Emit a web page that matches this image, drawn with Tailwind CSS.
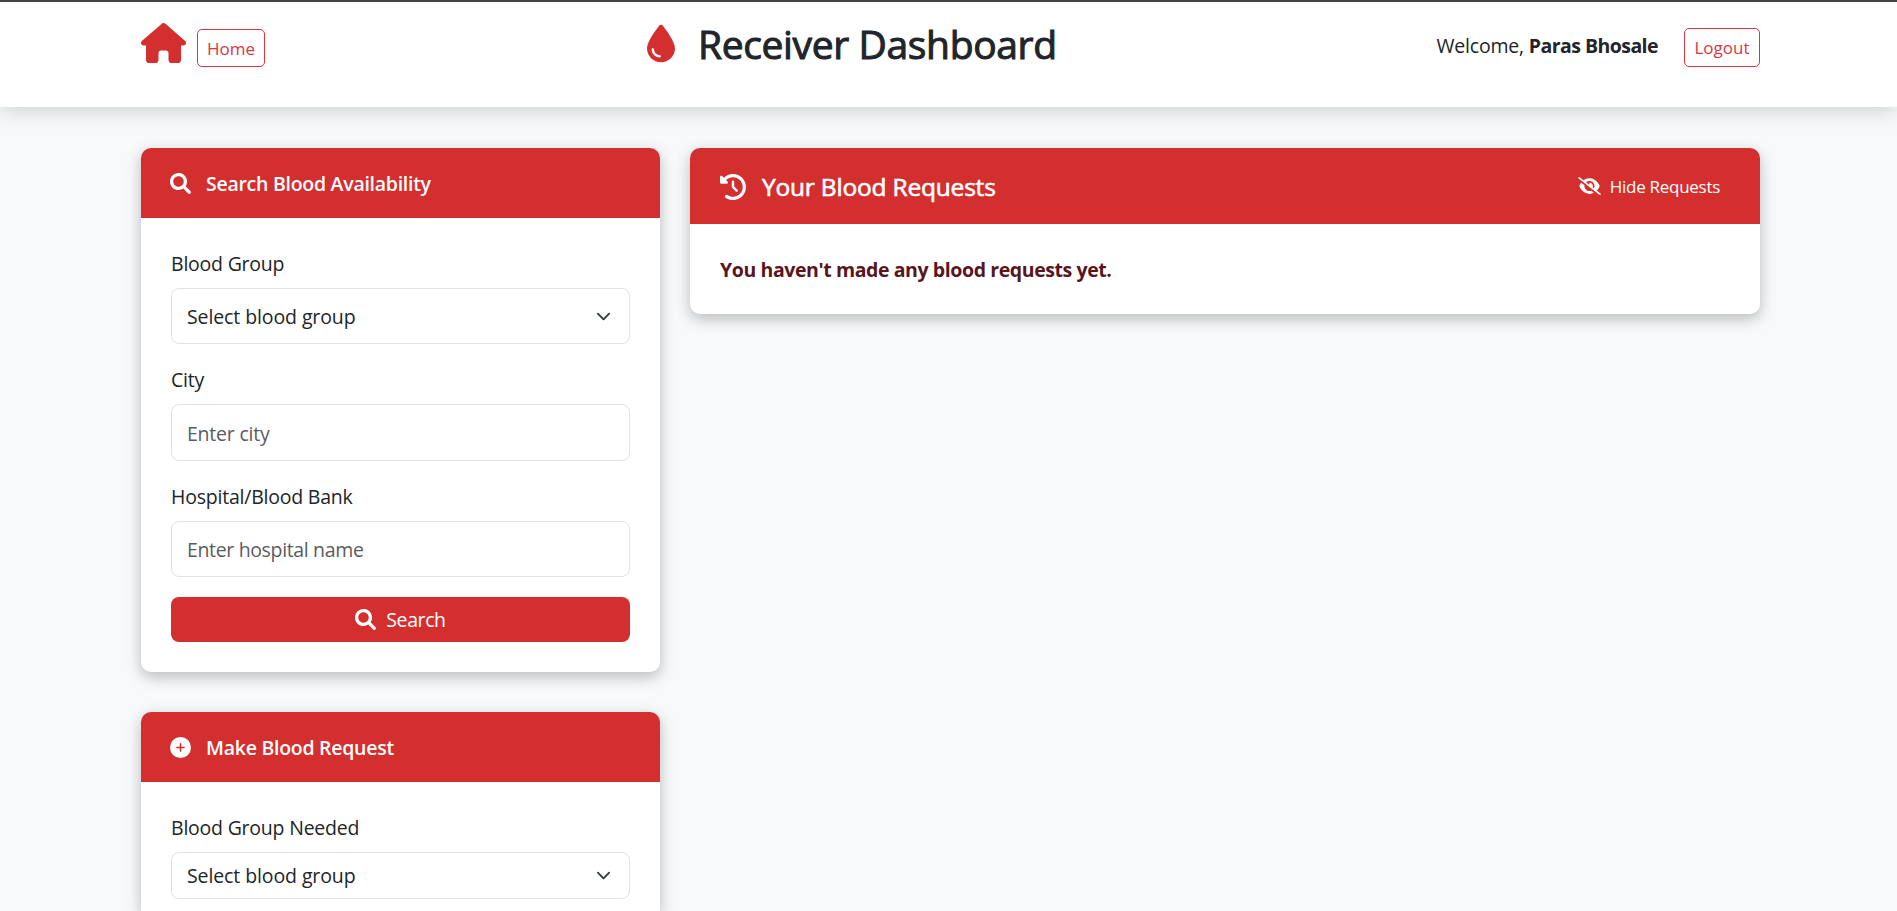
<!DOCTYPE html>
<html lang="en">
<head>
<meta charset="utf-8">
<title>Receiver Dashboard</title>
<script src="https://cdn.jsdelivr.net/npm/@tailwindcss/browser@4"></script>
</head>
<body class="h-[911px] overflow-hidden bg-[#f8f9fa] font-['Open_Sans','Noto_Sans',sans-serif] text-[19.5px] leading-[30px] text-[#212529]">
<svg class="hidden">
  <symbol id="search" viewBox="0 0 512 512"><path d="M500.3 443.7l-119.7-119.7c27.22-40.41 40.65-90.9 33.46-144.7C401.8 87.79 326.8 13.32 235.2 1.723C99.01-15.51-15.51 99.01 1.724 235.2c11.6 91.64 86.08 166.7 177.6 178.9c53.8 7.189 104.3-6.236 144.7-33.46l119.7 119.7c15.62 15.62 40.95 15.62 56.57 0C515.9 484.7 515.9 459.3 500.3 443.7zM79.1 208c0-70.58 57.42-128 128-128s128 57.42 128 128c0 70.58-57.42 128-128 128S79.1 278.6 79.1 208z"/></symbol>
  <symbol id="chevron" viewBox="0 0 16 16"><path fill="none" stroke="#343a40" stroke-linecap="round" stroke-linejoin="round" stroke-width="2" d="m2 5 6 6 6-6"/></symbol>
</svg>
<header class="relative h-[107px] border-t-2 border-[#444] bg-white pr-[137px] pl-[141px] shadow-[0_5px_19px_rgba(0,0,0,0.15)]">
  <div class="flex items-start">
    <div class="flex w-[506px] shrink-0 items-start gap-[11px] pt-[21px]">
      <svg class="h-[40px] w-[45px] shrink-0 fill-[#d32f2f]" viewBox="0 0 576 512"><path d="M575.8 255.5c0 18-15 32.1-32 32.1h-32l.7 160.2c0 2.7-.2 5.4-.5 8.1V472c0 22.1-17.9 40-40 40H456c-1.1 0-2.2 0-3.3-.1c-1.4 .1-2.8 .1-4.2 .1H416 392c-22.1 0-40-17.9-40-40V448 384c0-17.7-14.3-32-32-32H256c-17.7 0-32 14.3-32 32v64 24c0 22.1-17.9 40-40 40H160 128.1c-1.5 0-3-.1-4.5-.2c-1.2 .1-2.4 .2-3.6 .2H104c-22.1 0-40-17.9-40-40V360c0-.9 0-1.9 .1-2.8V287.6H32c-18 0-32-14-32-32.1c0-9 3-17 10-24L266.4 8c7-7 15-8 22-8s15 2 21 7L564.8 231.5c8 7 12 15 11 24z"/></svg>
      <a class="mt-[6px] flex h-[38px] w-[68px] items-center justify-center rounded-[5px] border border-[#dc3545] pt-0.5 text-[17px] text-[#dc3545]"><span>Home</span></a>
    </div>
    <h1 class="flex items-start pt-[22px] text-[39px] leading-[48px]">
      <svg class="mr-[23px] h-[39px] w-[28px] fill-[#d32f2f]" viewBox="0 0 384 512"><path d="M192 512C86 512 0 426 0 320C0 228.8 130.2 57.7 166.6 11.7C172.6 4.2 181.5 0 191.1 0h1.8c9.6 0 18.5 4.2 24.5 11.7C253.8 57.7 384 228.8 384 320c0 106-86 192-192 192zM96 336c0-8.8-7.2-16-16-16s-16 7.2-16 16c0 61.9 50.1 112 112 112c8.8 0 16-7.2 16-16s-7.2-16-16-16c-44.2 0-80-35.8-80-80z"/></svg>
      <span class="-mt-1 tracking-[-0.36px] whitespace-nowrap [-webkit-text-stroke:1px_#212529]">Receiver Dashboard</span>
    </h1>
    <div class="ml-auto flex items-start pt-[26px]">
      <span class="mt-[3px] mr-[26px] tracking-[-0.2px] whitespace-nowrap">Welcome, <b class="font-bold tracking-[-0.55px]">Paras Bhosale</b></span>
      <a class="flex h-[39px] w-[76px] items-center justify-center rounded-[5px] border border-[#dc3545] text-[17px] text-[#dc3545]"><span>Logout</span></a>
    </div>
  </div>
</header>
<main class="flex items-start gap-[30px] pt-[41px] pr-[137px] pl-[141px]">
  <div class="flex w-[519px] shrink-0 flex-col gap-10">
    <section class="h-[524px] overflow-hidden rounded-[10px] bg-white shadow-[0_5px_15px_rgba(0,0,0,0.25)]">
      <h2 class="flex h-[70px] items-center bg-[#d32f2f] pt-0.5 pl-[29px] font-semibold tracking-[-0.27px] text-white">
        <svg class="mr-[15px] -mt-0.5 h-[21px] w-[21px] fill-white"><use href="#search"/></svg><span>Search Blood Availability</span>
      </h2>
      <form class="flex flex-col px-[30px] pt-[31px] tracking-[-0.22px]">
        <label class="mb-[9px]">Blood Group</label>
        <div class="mb-[21px] flex h-[56px] items-center justify-between rounded-lg border border-[#dee2e6] pt-0.5 pr-[18px] pl-[15px]"><span class="tracking-[-0.1px]">Select blood group</span><svg class="-mt-0.5 h-[15px] w-[15px]"><use href="#chevron"/></svg></div>
        <label class="mb-[9px]">City</label>
        <div class="mb-[21px] flex h-[57px] items-center rounded-lg border border-[#dee2e6] pt-0.5 pl-[15px] text-[#595c5f]"><span>Enter city</span></div>
        <label class="mb-[9px]">Hospital/Blood Bank</label>
        <div class="mb-5 flex h-[56px] items-center rounded-lg border border-[#dee2e6] pt-0.5 pl-[15px] text-[#595c5f]"><span class="tracking-[-0.35px]">Enter hospital name</span></div>
        <button type="button" class="flex h-[45px] items-center justify-center gap-[10px] rounded-lg bg-[#d32f2f] text-white"><svg class="h-[21px] w-[21px] fill-white"><use href="#search"/></svg><span class="pt-px tracking-[-0.4px]">Search</span></button>
      </form>
    </section>
    <section class="h-[199px] overflow-hidden rounded-t-[10px] bg-white shadow-[0_5px_15px_rgba(0,0,0,0.25)]">
      <h2 class="flex h-[70px] items-center bg-[#d32f2f] pt-0.5 pl-[29px] font-semibold tracking-[-0.27px] text-white">
        <svg class="mr-[15px] -mt-0.5 h-[21px] w-[21px]" viewBox="0 0 512 512"><circle cx="256" cy="256" r="256" fill="#fff"/><path d="M256 168v176M168 256h176" stroke="#d32f2f" stroke-width="38" stroke-linecap="round"/></svg><span>Make Blood Request</span>
      </h2>
      <form class="flex flex-col px-[30px] pt-[31px] tracking-[-0.22px]">
        <label class="mb-[9px]">Blood Group Needed</label>
        <div class="flex h-[47px] items-center justify-between rounded-lg border border-[#dee2e6] pt-px pr-[18px] pl-[15px]"><span class="tracking-[-0.1px]">Select blood group</span><svg class="-mt-0.5 h-[15px] w-[15px]"><use href="#chevron"/></svg></div>
      </form>
    </section>
  </div>
  <section class="h-[166px] grow overflow-hidden rounded-[10px] bg-white shadow-[0_5px_15px_rgba(0,0,0,0.25)]">
    <div class="flex h-[76px] items-center justify-between bg-[#d32f2f] pt-px pr-10 pl-[30px] text-white">
      <h2 class="flex items-center text-[24.5px]">
        <svg class="mr-4 h-[26px] w-[26px] fill-white" viewBox="0 0 512 512"><path d="M75 75L41 41C25.9 25.9 0 36.6 0 57.9V168c0 13.3 10.7 24 24 24H134.1c21.4 0 32.1-25.9 17-41l-30.8-30.8C155 85.5 203 64 256 64c106 0 192 86 192 192s-86 192-192 192c-40.8 0-78.6-12.7-109.7-34.4c-14.5-10.1-34.4-6.6-44.6 7.9s-6.6 34.4 7.9 44.6C151.2 495 201.7 512 256 512c141.4 0 256-114.6 256-256S397.4 0 256 0C185.3 0 121.3 28.7 75 75zm181 53c-13.3 0-24 10.7-24 24V256c0 6.4 2.5 12.5 7 17l72 72c9.4 9.4 24.6 9.4 33.9 0s9.4-24.6 0-33.9l-65-65V152c0-13.3-10.7-24-24-24z"/></svg><span class="pt-px tracking-[-0.2px] [-webkit-text-stroke:0.6px_white]">Your Blood Requests</span>
      </h2>
      <div class="flex items-center text-[17px] tracking-[-0.28px]">
        <svg class="mr-[9px] -mt-px h-[18px] w-[23px] fill-white" viewBox="0 0 640 512"><path d="M38.8 5.1C28.4-3.1 13.3-1.2 5.1 9.2S-1.2 34.7 9.2 42.9l592 464c10.4 8.2 25.5 6.3 33.7-4.1s6.3-25.5-4.1-33.7L525.6 386.7c39.6-40.6 66.4-86.1 79.9-118.4c3.3-7.9 3.3-16.7 0-24.6c-14.9-35.7-46.2-87.7-93-131.1C465.5 68.8 400.8 32 320 32c-68.2 0-125 26.3-169.3 60.8L38.8 5.1zM223.1 149.5C248.6 126.2 282.7 112 320 112c79.5 0 144 64.5 144 144c0 24.9-6.3 48.3-17.4 68.7L408 294.5c8.4-19.3 10.6-41.4 4.8-63.3c-11.1-41.5-47.8-69.4-88.6-71.1c-5.8-.2-9.2 6.1-7.4 11.7c2.1 6.4 3.3 13.2 3.3 20.3c0 10.2-2.4 19.8-6.6 28.3l-90.3-70.8zM373 389.9c-16.4 6.5-34.3 10.1-53 10.1c-79.5 0-144-64.5-144-144c0-6.9 .5-13.6 1.4-20.2L83.1 161.5C60.3 191.2 44 220.8 34.5 243.7c-3.3 7.9-3.3 16.7 0 24.6c14.9 35.7 46.2 87.7 93 131.1C174.5 443.2 239.2 480 320 480c47.8 0 89.9-12.9 126.2-32.5L373 389.9z"/></svg><span>Hide Requests</span>
      </div>
    </div>
    <p class="px-[30px] pt-[31px] font-bold tracking-[-0.41px] text-[#58151c]"><span>You haven't made any blood requests yet.</span></p>
  </section>
</main>
</body>
</html>
